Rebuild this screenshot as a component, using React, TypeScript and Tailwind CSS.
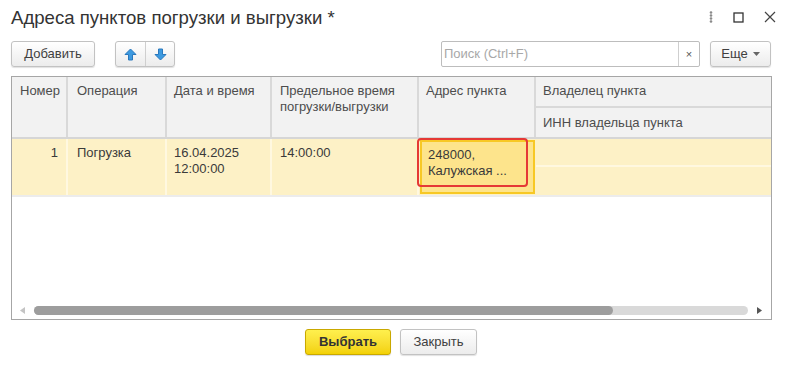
import React from "react";

const ArrowUp = () => (
  <svg width="13" height="13" viewBox="0 0 13 13">
    <path d="M6.5 1 L12 6.5 L8.5 6.5 L8.5 12 L4.5 12 L4.5 6.5 L1 6.5 Z" fill="#3d9ae0" stroke="#2a78bd" strokeWidth="1" strokeLinejoin="round" />
  </svg>
);
const ArrowDown = () => (
  <svg width="13" height="13" viewBox="0 0 13 13">
    <path d="M6.5 12 L12 6.5 L8.5 6.5 L8.5 1 L4.5 1 L4.5 6.5 L1 6.5 Z" fill="#3d9ae0" stroke="#2a78bd" strokeWidth="1" strokeLinejoin="round" />
  </svg>
);

export default function App() {
  const font = { fontFamily: '"Liberation Sans", Arial, sans-serif' };
  return (
    <div className="w-[788px] h-[366px] bg-white relative overflow-hidden text-[#4d4d4d]" style={font}>
      {/* title bar */}
      <div className="h-[36px] flex items-start pt-[6px] pl-[11px] pr-[12px]">
        <div className="text-[18.6px] leading-[24px] text-[#333] flex-1">Адреса пунктов погрузки и выгрузки *</div>
        <div className="flex items-center gap-[20px] pt-[5px]">
          <svg width="4" height="12" viewBox="0 0 4 12">
            <circle cx="2" cy="1.5" r="1.3" fill="#8a8a8a" />
            <circle cx="2" cy="4.5" r="1.3" fill="#8a8a8a" />
            <circle cx="2" cy="7.5" r="1.3" fill="#8a8a8a" />
            <circle cx="2" cy="10.5" r="1.3" fill="#8a8a8a" />
          </svg>
          <svg width="11" height="11" viewBox="0 0 11 11">
            <rect x="1" y="1" width="9" height="9" fill="none" stroke="#333" strokeWidth="1.3" />
          </svg>
          <svg width="12" height="12" viewBox="0 0 12 12">
            <path d="M1 1 L11 11 M11 1 L1 11" stroke="#444" strokeWidth="1.2" />
          </svg>
        </div>
      </div>

      {/* toolbar */}
      <div className="mt-[5px] h-[26px] flex items-stretch pl-[11px] pr-[17px]">
        <button className="w-[84px] rounded-[3px] border border-[#c2c2c2] bg-gradient-to-b from-white to-[#ececec] shadow-[0_1px_1px_rgba(0,0,0,0.12)] text-[13px] text-[#404040]">
          Добавить
        </button>
        <div className="ml-[20px] w-[60px] flex rounded-[3px] border border-[#c2c2c2] bg-gradient-to-b from-white to-[#ececec] shadow-[0_1px_1px_rgba(0,0,0,0.12)]">
          <div className="w-[30px] flex items-center justify-center border-r border-[#cfcfcf]">
            <ArrowUp />
          </div>
          <div className="flex-1 flex items-center justify-center">
            <ArrowDown />
          </div>
        </div>
        <div className="flex-1" />
        <div className="w-[259px] flex border border-[#bdbdbd] rounded-[2px] bg-white">
          <div className="flex-1 flex items-center pl-[2px] text-[13px] text-[#a8a8a8]">Поиск (Ctrl+F)</div>
          <div className="w-[21px] border-l border-[#cfcfcf] flex items-center justify-center text-[11px] text-[#555]">×</div>
        </div>
        <button className="ml-[10px] w-[61px] rounded-[3px] border border-[#c2c2c2] bg-gradient-to-b from-white to-[#ececec] shadow-[0_1px_1px_rgba(0,0,0,0.12)] text-[13px] text-[#404040] flex items-center justify-center gap-[5px]">
          <span>Еще</span>
          <svg width="7" height="4" viewBox="0 0 7 4"><path d="M0 0 L7 0 L3.5 4 Z" fill="#666" /></svg>
        </button>
      </div>

      {/* table */}
      <div className="mt-[9px] ml-[11px] w-[761px] h-[244px] border border-[#a6a6a6] flex flex-col text-[13px] leading-[16px]">
        {/* header */}
        <div className="h-[62px] flex bg-[#f2f2f2] border-b-2 border-[#d6d6d6] text-[#4d4d4d]">
          <div className="w-[56px] border-r-2 border-[#d9d9d9] pt-[6px] pl-[8px]">Номер</div>
          <div className="w-[99px] border-r-2 border-[#d9d9d9] pt-[6px] pl-[9px]">Операция</div>
          <div className="w-[105px] border-r-2 border-[#d9d9d9] pt-[6px] pl-[7px]">Дата и время</div>
          <div className="w-[147px] border-r-2 border-[#d9d9d9] pt-[6px] pl-[8px]">Предельное время<br />погрузки/выгрузки</div>
          <div className="w-[117px] border-r-2 border-[#d9d9d9] pt-[6px] pl-[7px]">Адрес пункта</div>
          <div className="flex-1 flex flex-col">
            <div className="h-[31px] border-b-2 border-[#d9d9d9] pt-[6px] pl-[7px]">Владелец пункта</div>
            <div className="flex-1 pt-[7px] pl-[7px]">ИНН владельца пункта</div>
          </div>
        </div>
        {/* data row */}
        <div className="h-[58px] flex bg-[#fdf1c6] border-b-2 border-[#ececec] text-[#3a3a3a]">
          <div className="w-[56px] border-r-2 border-[#fff8e0] pt-[6px] pr-[8px] text-right">1</div>
          <div className="w-[99px] border-r-2 border-[#fff8e0] pt-[6px] pl-[9px]">Погрузка</div>
          <div className="w-[105px] border-r-2 border-[#fff8e0] pt-[6px] pl-[7px]">16.04.2025<br />12:00:00</div>
          <div className="w-[147px] border-r-2 border-[#fff8e0] pt-[6px] pl-[8px]">14:00:00</div>
          <div className="w-[117px] relative">
            <div className="absolute inset-[1px] bottom-[1px] border-2 border-[#f7c825] bg-[#fde48c] pt-[5px] pl-[6px]">
              248000,<br />Калужская ...
            </div>
            <div className="absolute left-[-2px] top-[-1px] w-[111px] h-[49px] border-[2.5px] border-[#e53935] rounded-[4px]" />
          </div>
          <div className="flex-1 flex flex-col">
            <div className="h-[28px] border-b-2 border-[#fff8e0]" />
            <div className="flex-1" />
          </div>
        </div>
        <div className="flex-1" />
        {/* scrollbar */}
        <div className="h-[18px] flex items-center pl-[8px] pr-[9px]">
          <svg width="5" height="7" viewBox="0 0 5 7"><path d="M5 0 L0 3.5 L5 7 Z" fill="#c4c4c4" /></svg>
          <div className="ml-[9px] flex-1 h-[9px] rounded-full bg-[#d9d9d9] flex">
            <div className="w-[579px] h-full rounded-full bg-[#9d9d9d]" />
          </div>
          <svg className="ml-[9px]" width="5" height="7" viewBox="0 0 5 7"><path d="M0 0 L5 3.5 L0 7 Z" fill="#555" /></svg>
        </div>
      </div>

      {/* bottom buttons */}
      <div className="mt-[9px] flex pl-[305px] gap-[9px] h-[26px]">
        <button className="w-[86px] rounded-[3px] border border-[#c9a800] bg-gradient-to-b from-[#fff04d] to-[#f3d100] shadow-[0_1px_1px_rgba(0,0,0,0.15)] text-[13px] font-bold text-[#333]">
          Выбрать
        </button>
        <button className="w-[77px] rounded-[3px] border border-[#c2c2c2] bg-gradient-to-b from-white to-[#ececec] shadow-[0_1px_1px_rgba(0,0,0,0.12)] text-[13px] text-[#404040]">
          Закрыть
        </button>
      </div>
    </div>
  );
}
